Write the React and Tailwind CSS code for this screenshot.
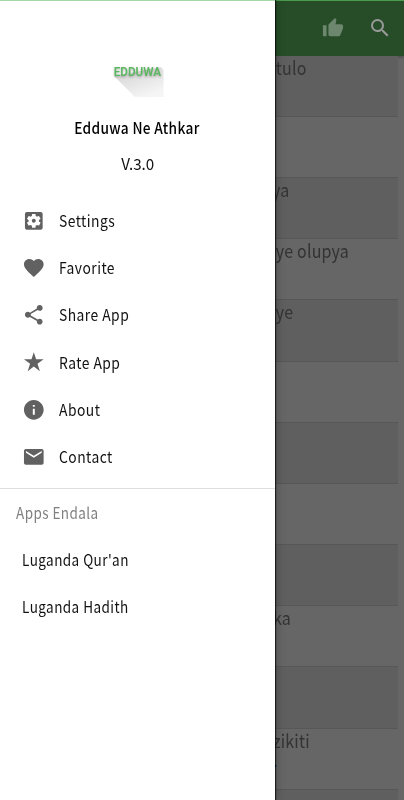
import { MdEmail, MdFavorite, MdInfo, MdSearch, MdSettingsApplications, MdShare, MdThumbUp } from "react-icons/md";

function StarIcon({ className }) {
  return (
    <svg viewBox="0 0 24 24" fill="currentColor" className={className}>
      <path d="M12 2.3l2.35 7.2H22l-6.2 4.6 2.4 7.4-6.2-4.6-6.2 4.6 2.4-7.4L2 9.5h7.65z" />
    </svg>
  );
}

const menu = [
  { label: "Settings", Icon: MdSettingsApplications },
  { label: "Favorite", Icon: MdFavorite },
  { label: "Share App", Icon: MdShare },
  { label: "Rate App", Icon: StarIcon },
  { label: "About", Icon: MdInfo },
  { label: "Contact", Icon: MdEmail },
];

const rows = [
  { text: "tulo", pad: "pl-[1px]" },
  { text: "" },
  { text: "ya", pad: "-ml-[3px]" },
  { text: "ye olupya", pad: "pl-[1px]" },
  { text: "ye", pad: "pl-[1px]" },
  { text: "" },
  { text: "" },
  { text: "" },
  { text: "" },
  { text: "ka", pad: "-ml-[2px]" },
  { text: "" },
  { text: "zikiti", pad: "-ml-[2px]", more: "." },
  { text: "" },
];

export default function App() {
  return (
    <div className="relative flex h-[800px] w-[404px] overflow-hidden bg-[#666666] font-['Noto_Sans_CJK_SC','Noto_Sans',sans-serif]">
      {/* Drawer */}
      <aside className="relative z-10 flex h-full w-[275px] shrink-0 flex-col border-t border-[#a5d6a7] bg-white shadow-[1px_0_1px_rgba(0,0,0,0.65),2px_0_8px_rgba(0,0,0,0.22)]">
        <div className="flex h-[196px] flex-col items-center pt-[57px]">
          <svg viewBox="0 0 60 44" className="h-[44px] w-[60px] shrink-0">
            <defs>
              <linearGradient id="shade" x1="0" y1="0" x2="0.6" y2="1">
                <stop offset="0" stopColor="#cfcfcf" />
                <stop offset="1" stopColor="#f5f5f5" />
              </linearGradient>
            </defs>
            <path d="M6 18L53 9L55.5 12V39H27z" fill="url(#shade)" />
            <text
              x="5.7"
              y="17.8"
              textLength="47.5"
              lengthAdjust="spacingAndGlyphs"
              className="fill-[#5cb860] font-['Roboto',sans-serif] text-[12px] font-semibold drop-shadow-[0_1px_1px_rgba(0,0,0,0.3)]"
            >
              EDDUWA
            </text>
          </svg>
          <div className="mt-[14px] mr-px h-6 scale-x-[0.885] text-[15.5px] leading-[23px] font-medium tracking-[0.35px] whitespace-nowrap text-black">
            Edduwa Ne Athkar
          </div>
          <div className="mt-3 h-6 scale-x-[0.98] text-[15.5px] leading-[23px] text-[#111]">V.3.0</div>
        </div>

        <nav>
          {menu.map(({ label, Icon }) => (
            <div key={label} className="flex h-[47.2px] items-center pl-[22px] text-[#616161]">
              <Icon className="size-[23.6px] shrink-0" />
              <span className="mb-px ml-[13.5px] origin-left scale-x-[0.895] text-[15.5px] leading-6 tracking-[0.5px] text-[#111]">{label}</span>
            </div>
          ))}
        </nav>

        <div className="mt-[8px] border-t border-[#dedede]">
          <div className="flex h-[47px] items-center pl-4">
            <span className="mb-[2px] origin-left scale-x-[0.87] text-[15.5px] leading-6 tracking-[0.5px] text-[#808080]">Apps Endala</span>
          </div>
          <div className="flex h-[47px] items-center pl-[22px]">
            <span className="mb-[2px] origin-left scale-x-[0.872] text-[15.5px] leading-6 tracking-[0.5px] text-[#111]">Luganda Qur'an</span>
          </div>
          <div className="flex h-[47px] items-center pl-[22px]">
            <span className="mb-[2px] origin-left scale-x-[0.872] text-[15.5px] leading-6 tracking-[0.5px] text-[#111]">Luganda Hadith</span>
          </div>
        </div>
      </aside>

      {/* Dimmed page behind the drawer */}
      <main className="flex min-w-0 flex-1 flex-col">
        <header className="flex h-[55.6px] shrink-0 items-center justify-end gap-[24px] border-t border-[#4b9b4f] bg-[#264d28] pr-[12px] text-[#999] shadow-[0_1px_3px_rgba(0,0,0,0.3)]">
          <MdThumbUp className="size-[22px] text-[#6d866e]" />
          <MdSearch className="size-[24px]" />
        </header>
        <ul className="mr-[6px]">
          {rows.map(({ text, pad, more }, i) => (
            <li
              key={i}
              className={`h-[61.2px] border-b border-[#575757] text-[18.5px] leading-[23px] tracking-[0.2px] text-[#333] ${i % 2 ? "" : "bg-[#5f5f5f]"}`}
            >
              <span className={`block origin-left scale-x-[0.865] whitespace-nowrap ${pad || ""}`}>{text}</span>
              {more && (
                <span className="mt-[3px] -ml-[2px] block font-['Liberation_Sans',sans-serif] text-[14px] leading-[14px] font-bold text-black">{more}</span>
              )}
            </li>
          ))}
        </ul>
      </main>
    </div>
  );
}
